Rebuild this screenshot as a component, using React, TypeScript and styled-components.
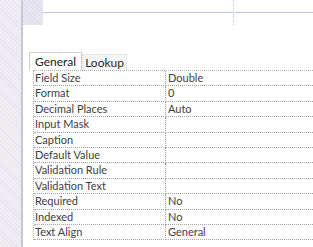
import { Fragment } from "react";
import styled, { createGlobalStyle } from "styled-components";

const GlobalStyle = createGlobalStyle`
    html, body {
        margin: 0;
        padding: 0;
        background: #ffffff;
    }
    body {
        font-family: Lato, "Noto Sans", sans-serif;
    }
`;

const Frame = styled.div`
    width: 313px;
    height: 247px;
    display: flex;
    flex-direction: row;
    overflow: hidden;
    background: #ffffff;
`;

const SideStrip = styled.div`
    width: 21px;
    background-color: #f2eff4;
    background-image: repeating-linear-gradient(45deg, rgba(210, 200, 225, 0.35) 0 1px, transparent 1px 3px);
    border-right: 2px solid #c9c7cf;
`;

const Main = styled.div`
    flex: 1;
    display: flex;
    flex-direction: column;
    min-width: 0;
`;

const TopBar = styled.div`
    height: 25px;
    display: flex;
    flex-direction: row;
`;

const CornerBox = styled.div`
    width: 20px;
    background-color: #e9e7f0;
    background-image: repeating-linear-gradient(45deg, rgba(200, 205, 230, 0.4) 0 1px, transparent 1px 3px);
`;

const RuleSegment = styled.div<{ $width?: number }>`
    ${(p) => (p.$width ? `width: ${p.$width}px;` : "flex: 1;")}
    display: flex;
    align-items: center;

    &::after {
        content: "";
        display: block;
        width: 100%;
        height: 1px;
        background: #bfc8da;
    }
`;

const RuleTick = styled.div`
    width: 1px;
    border-left: 1px dotted #b9c2dc;
`;

const Sheet = styled.div`
    margin-top: 26px;
    padding-left: 6px;
    display: flex;
    flex-direction: column;
`;

const TabRow = styled.div`
    display: flex;
    flex-direction: row;
    align-items: flex-end;
    height: 19px;
`;

const Tab = styled.div<{ $active?: boolean }>`
    font-size: 12px;
    color: ${(p) => (p.$active ? "#222222" : "#2a2a2a")};
    line-height: ${(p) => (p.$active ? "17px" : "15px")};
    padding: 0 ${(p) => (p.$active ? "5px" : "2px")};
    border: 1px ${(p) => (p.$active ? "solid #cfcfcf" : "dotted #d4d4d4")};
    border-bottom: none;
    background: ${(p) => (p.$active ? "#ffffff" : "#f6f6f6")};
`;

const Grid = styled.div`
    margin-left: 4px;
    border-top: 1px dotted #b0b0b0;
    border-left: 1px dotted #b0b0b0;
    display: grid;
    grid-template-columns: 132px 1fr;
`;

const Cell = styled.div<{ $value?: boolean }>`
    height: 14.4px;
    line-height: 14.4px;
    font-size: 11px;
    color: #404040;
    padding-left: ${(p) => (p.$value ? "2px" : "1px")};
    border-bottom: 1px dotted #a5a5a5;
    ${(p) => (p.$value ? "" : "border-right: 1px dotted #a5a5a5;")}
    white-space: nowrap;
    overflow: hidden;
`;

const rows: [string, string][] = [
    ["Field Size", "Double"],
    ["Format", "0"],
    ["Decimal Places", "Auto"],
    ["Input Mask", ""],
    ["Caption", ""],
    ["Default Value", ""],
    ["Validation Rule", ""],
    ["Validation Text", ""],
    ["Required", "No"],
    ["Indexed", "No"],
    ["Text Align", "General"],
];

export default function App() {
    return (
        <>
            <GlobalStyle />
            <Frame>
                <SideStrip />
                <Main>
                    <TopBar>
                        <CornerBox />
                        <RuleSegment $width={190} />
                        <RuleTick />
                        <RuleSegment />
                    </TopBar>
                    <Sheet>
                        <TabRow>
                            <Tab $active>General</Tab>
                            <Tab>Lookup</Tab>
                        </TabRow>
                        <Grid>
                            {rows.map(([label, value]) => (
                                <Fragment key={label}>
                                    <Cell>{label}</Cell>
                                    <Cell $value>{value}</Cell>
                                </Fragment>
                            ))}
                        </Grid>
                    </Sheet>
                </Main>
            </Frame>
        </>
    );
}
